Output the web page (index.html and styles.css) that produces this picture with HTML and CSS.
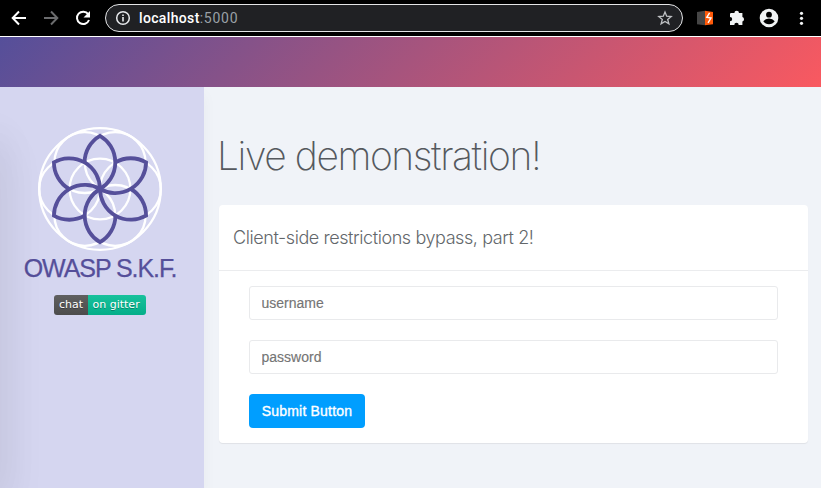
FILE: index.html
```html
<!DOCTYPE html>
<html lang="en">
<head>
<meta charset="utf-8">
<title>Live demonstration!</title>
<link rel="stylesheet" href="styles.css">
</head>
<body>
<div class="toolbar">
  <svg class="nav" width="105" height="36" viewBox="0 0 105 36" fill="none" stroke-width="2">
    <path stroke="#fff" d="M26 18H13M19 11.5 12.7 18l6.3 6.5"/>
    <path stroke="#6b6c6e" d="M44 18h13M51 11.5l6.3 6.5-6.3 6.5"/>
    <path stroke="#fff" d="M88.2 14.2A6.2 6.2 0 1 0 89 20"/>
    <path fill="#fff" d="M90 11v6.5h-6.5z"/>
  </svg>
  <div class="address">
    <svg width="16" height="16" viewBox="0 0 16 16"><circle cx="8" cy="8" r="6.3" fill="none" stroke="#e8eaed" stroke-width="1.5"/><path fill="#e8eaed" d="M7.2 7h1.6v4.4H7.2zM7.2 4.4h1.6V6H7.2z"/></svg>
    <span class="url">localhost<span class="port">:5000</span></span>
    <svg class="star" width="16" height="16" viewBox="0 0 16 16"><path fill="none" stroke="#bfc1c4" stroke-width="1.3" d="m8 2 1.7 4.2 4.5.3-3.5 2.9 1.2 4.4L8 11.4l-3.9 2.4 1.2-4.4-3.5-2.9 4.5-.3z"/></svg>
  </div>
  <svg class="tools" width="138" height="36" viewBox="683 0 138 36">
    <path fill="#464646" d="m697 12 8-1.2v14.4l-8-1z"/>
    <path fill="#ff5a0a" d="m705 10.8 8 1.2v12.2l-8 1z"/>
    <path fill="none" stroke="#fff" stroke-width="1.4" d="m709.6 12.8-2.8 4.4 4.2.8-3 4.8"/>
    <path fill="#f1f3f4" d="M731.2 13h3.2a2.3 2.3 0 0 1 4.6 0h3.4v4a2.3 2.3 0 0 1 0 4.4V25h-3.7a2.2 2.2 0 0 0-4.4 0H730v-3.7a2.2 2.2 0 0 0 0-4.4V14q0-1 1.2-1z"/>
    <circle cx="769" cy="18" r="9.3" fill="#f1f3f4"/>
    <circle cx="769" cy="14.7" r="2.9"/><path d="M763.3 21.3q2-2.7 5.7-2.7t5.7 2.7q-2 3-5.7 3t-5.7-3z"/>
    <g fill="#f1f3f4"><circle cx="801.5" cy="13.3" r="1.6"/><circle cx="801.5" cy="18.3" r="1.6"/><circle cx="801.5" cy="23.3" r="1.6"/></g>
  </svg>
</div>
<header class="banner"></header>
<div class="page">
  <aside class="sidebar">
    <svg class="logo" width="126" height="126" viewBox="-63 -63 126 126" fill="none">
      <defs>
        <path id="petal" d="M-15.4-26.7A30.8 30.8 0 0 1 0-53.2 30.8 30.8 0 0 1 0 0"/>
      </defs>
      <g stroke="#fff" stroke-width="2.3">
        <circle r="60.8"/><circle r="30.4"/>
        <circle cx="30.4" r="30.4"/><circle cx="-30.4" r="30.4"/>
        <circle cx="15.2" cy="-26.4" r="30.4"/><circle cx="-15.2" cy="-26.4" r="30.4"/>
        <circle cx="15.2" cy="26.4" r="30.4"/><circle cx="-15.2" cy="26.4" r="30.4"/>
      </g>
      <g stroke="#554f9a" stroke-width="3.8">
        <use href="#petal"/><use href="#petal" transform="rotate(60)"/><use href="#petal" transform="rotate(120)"/>
        <use href="#petal" transform="rotate(180)"/><use href="#petal" transform="rotate(240)"/><use href="#petal" transform="rotate(300)"/>
      </g>
    </svg>
    <div class="brand">OWASP S.K.F.</div>
    <div class="badge"><span class="chat">chat</span><span class="gitter">on gitter</span></div>
  </aside>
  <main class="content">
    <h1>Live demonstration!</h1>
    <section class="card">
      <h2>Client-side restrictions bypass, part 2!</h2>
      <form class="form">
        <input type="text" placeholder="username">
        <input type="password" placeholder="password">
        <button type="button">Submit Button</button>
      </form>
    </section>
  </main>
</div>
</body>
</html>
```
FILE: styles.css
```css
* { box-sizing: border-box; }
body {
  margin: 0;
  height: 488px;
  overflow: hidden;
  display: flex;
  flex-direction: column;
  background: #f0f3f8;
  font-family: "Liberation Sans", Arial, sans-serif;
}
svg { display: block; flex: none; }
.toolbar {
  height: 37px;
  flex: none;
  display: flex;
  background: #000;
  border-bottom: 1px solid #fff;
}
.address {
  width: 578px;
  height: 28px;
  margin-top: 4px;
  padding: 0 9px;
  display: flex;
  align-items: center;
  border: 1px solid #e4e5e7;
  border-radius: 14px;
  background: #202124;
}
.url {
  margin-left: 8px;
  color: #fff;
  font: 500 14px/20px Roboto, sans-serif;
  letter-spacing: 0.35px;
}
.port { color: #9aa0a6; font-weight: 400; letter-spacing: 0.75px; }
.star { margin-left: auto; }
.banner {
  height: 50px;
  flex: none;
  background: linear-gradient(135deg, #554f9a, #f95960);
}
.page { flex: 1; display: flex; }
.sidebar {
  position: relative;
  width: 204px;
  padding-top: 39px;
  display: flex;
  flex-direction: column;
  align-items: center;
  background: #d5d6f0;
  box-shadow: 0 8px 14px rgba(0, 0, 0, 0.04);
  clip-path: inset(0 -16px 0 0);
}
/* soft shade along the left edge */
.sidebar::before {
  content: "";
  position: absolute;
  left: -20px;
  top: 38px;
  bottom: 0;
  width: 20px;
  box-shadow: 0 24px 46px rgba(0, 0, 0, 0.1), 0 10px 40px 2px rgba(0, 0, 0, 0.06);
}
.logo { position: relative; margin-left: -4px; }
.brand {
  margin: 2px 0 0 -4px;
  font-size: 25px;
  line-height: 28px;
  color: #554f9a;
  white-space: nowrap;
  letter-spacing: -1.05px;
  -webkit-text-stroke: 0.25px #554f9a;
}
.badge {
  margin: 13px 0 0 -4px;
  display: flex;
  border-radius: 3px;
  overflow: hidden;
  font: 11px/20px "DejaVu Sans", Verdana, sans-serif;
  color: #fff;
  text-shadow: 0 1px rgba(1, 1, 1, 0.3);
}
.chat { width: 34px; text-align: center; background: linear-gradient(#606060, #4c4c4c); }
.gitter { width: 58px; padding-left: 4.5px; letter-spacing: 0; background: linear-gradient(#18c19c, #04ae89); }
.content { flex: 1; padding: 39px 13px 0 15px; }
h1 {
  margin: 0 0 0 -2px;
  font: 200 39px/59px Inter, sans-serif;
  height: 60px;
  letter-spacing: -1.42px;
  color: #55595e;
  white-space: nowrap;
}
.card {
  height: 238px;
  margin-top: 19px;
  border-radius: 4px;
  background: #fff;
  box-shadow: 0 1px 1px rgba(0, 0, 0, 0.07);
}
h2 {
  margin: 0;
  height: 66px;
  padding: 0 14px;
  border-bottom: 1px solid #ebecee;
  font: 300 18px/66px Inter, sans-serif;
  letter-spacing: -0.42px;
  color: #63676b;
  white-space: nowrap;
}
.form {
  padding: 15px 30px;
  display: flex;
  flex-direction: column;
  align-items: flex-start;
  gap: 20px;
}
input {
  width: 100%;
  height: 34px;
  padding: 0 11.5px;
  border: 1px solid #e9eaec;
  border-radius: 3px;
  font: 14px "Liberation Sans", Arial, sans-serif;
}
input::placeholder { color: #757575; -webkit-text-stroke: 0.15px #757575; }
button {
  width: 116px;
  height: 34px;
  padding: 0;
  border: 0;
  border-radius: 4px;
  background: #009eff;
  color: #fff;
  font: 14px "Liberation Sans", Arial, sans-serif;
  letter-spacing: 0.2px;
  -webkit-text-stroke: 0.35px #fff;
}
```
